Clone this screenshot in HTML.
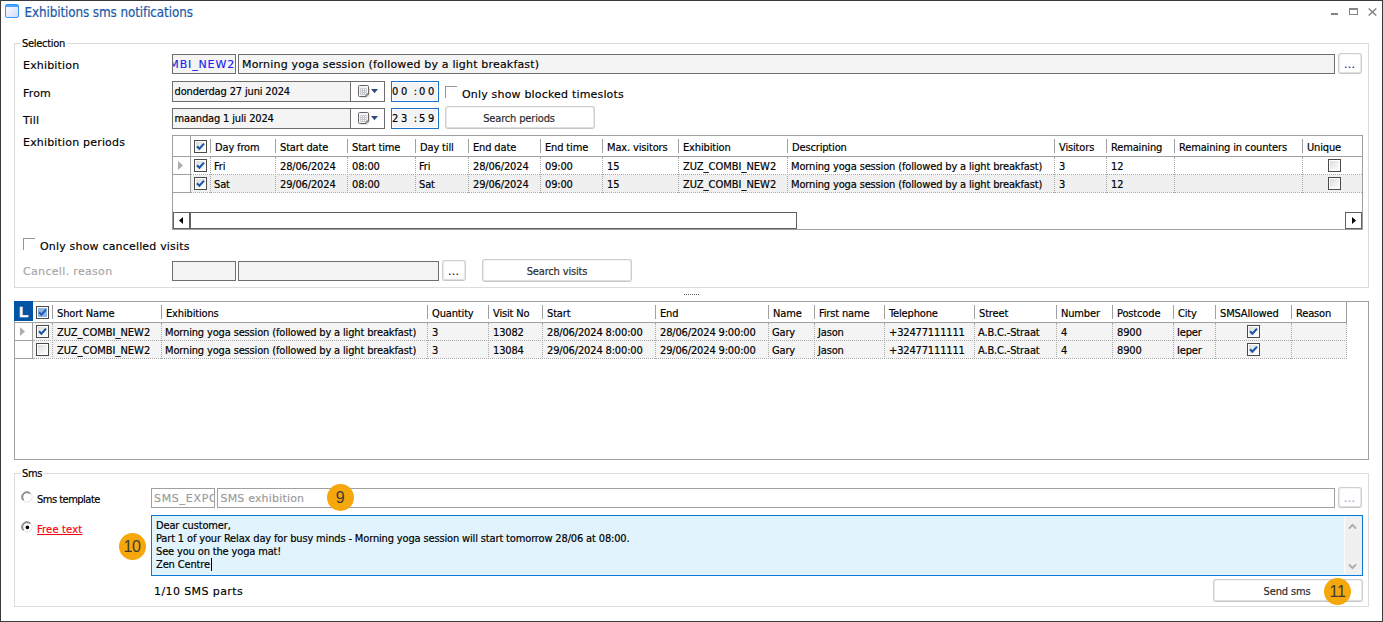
<!DOCTYPE html><html><head><meta charset="utf-8"><title>Exhibitions sms notifications</title><style>
*{box-sizing:border-box;margin:0;padding:0}
html,body{width:1383px;height:622px;overflow:hidden;background:#fff}
body{position:relative;font-family:"DejaVu Sans Condensed","DejaVu Sans","Liberation Sans",sans-serif;font-stretch:condensed;font-size:11px;color:#000}
.a{position:absolute}
.t{position:absolute;white-space:pre;font-family:"DejaVu Sans Condensed","DejaVu Sans","Liberation Sans",sans-serif;font-stretch:condensed;font-size:11px;line-height:13px;letter-spacing:-0.15px;color:#000;-webkit-text-stroke:0.18px currentColor}
.v{position:absolute;white-space:pre;font-family:"DejaVu Sans","Liberation Sans",sans-serif;font-stretch:normal;font-size:11px;line-height:13px;letter-spacing:0.18px;color:#000;-webkit-text-stroke:0.15px currentColor}
.win{position:absolute;left:0;top:0;width:1383px;height:622px;border:1px solid #3a3a3a;z-index:50;pointer-events:none}
.gb{position:absolute;border:1px solid #dcdcdc}
.gbl{background:#fff;padding:0 2px}
.fld{position:absolute;border:1px solid #6e6e6e;background:#f4f4f4;overflow:hidden}
.fld2{position:absolute;border:1px solid #a0a0a0;background:#fff;overflow:hidden}
.btn{position:absolute;border:1px solid #cecece;border-bottom-color:#c6c6c6;border-radius:3px;background:#fff;box-shadow:inset 1px 0 0 #e9e9e9, inset -1px 0 0 #e9e9e9, inset 0 1px 0 #f5f5f5, inset 0 -1px 0 #dfdfdf}
.grid{position:absolute;border:1px solid #a0a0a0;background:#fff;overflow:hidden}
.hs{position:absolute;width:1px;background:#a0a0a0}
.hl{position:absolute;height:1px;background:#a0a0a0}
.dv{position:absolute;width:0;border-left:1px dotted #a8a8a8}
.dh{position:absolute;height:0;border-top:1px dotted #a8a8a8}
.cb{position:absolute;width:13px;height:13px}
.circ{position:absolute;width:27px;height:27px;border-radius:50%;background:#f5a70c;color:#3b3b3b;font-family:"Liberation Sans",sans-serif;font-stretch:normal;font-size:16px;line-height:28.5px;text-align:center;letter-spacing:-0.3px}
</style></head><body>
<div class="win"></div>
<svg class="a" style="left:5px;top:4px" width="14" height="14" viewBox="0 0 14 14"><defs><linearGradient id="ig" x1="0" y1="0" x2="1" y2="1"><stop offset="0" stop-color="#ffffff"/><stop offset="1" stop-color="#d5d8f8"/></linearGradient></defs><rect x="0.5" y="0.5" width="13" height="13" rx="1.6" fill="url(#ig)" stroke="#2f97ff" stroke-width="1"/><rect x="1" y="1" width="12" height="2" fill="#4aa3ff"/></svg>
<span class="t" style="left:24.5px;top:3.5px;font-size:13.33px;line-height:17px;letter-spacing:-0.1px;color:#1a5aa6">Exhibitions sms notifications</span>
<div class="a" style="left:1331px;top:13px;width:7px;height:2px;background:#848484"></div>
<div class="a" style="left:1349px;top:8px;width:9px;height:7px;border:1px solid #848484;border-top-width:2px"></div>
<svg class="a" style="left:1368px;top:8px" width="9" height="8" viewBox="0 0 9 8"><path d="M0.7 0.5 L8.3 7.5 M8.3 0.5 L0.7 7.5" stroke="#848484" stroke-width="1.5" fill="none"/></svg>
<div class="gb" style="left:14px;top:43px;width:1355px;height:245px"></div>
<span class="t gbl" style="left:21px;top:37px;padding-left:1px;letter-spacing:-0.3px">Selection</span>
<span class="v" style="left:23px;top:59px;">Exhibition</span>
<span class="v" style="left:23px;top:87px;">From</span>
<span class="v" style="left:23px;top:114px;">Till</span>
<span class="v" style="left:23px;top:136px;">Exhibition periods</span>
<div class="fld" style="left:172px;top:54px;width:64px;height:20px"><span class="v" style="right:0px;top:3px;color:#2222ee;letter-spacing:0.85px">ZUZ_COMBI_NEW2</span></div>
<div class="fld" style="left:238px;top:54px;width:1097px;height:20px"><span class="v" style="left:3px;top:3px">Morning yoga session (followed by a light breakfast)</span></div>
<div class="btn" style="left:1338px;top:53px;width:24px;height:21px"><span class="v" style="left:5px;top:4px;color:#1a1aa0;letter-spacing:0.3px">...</span></div>
<div class="fld" style="left:172px;top:81px;width:213px;height:21px;background:#fff"><div class="a" style="left:0;top:0;width:177px;height:19px;background:#f4f4f4"></div><div class="a" style="left:177px;top:0;width:1px;height:19px;background:#6e6e6e"></div><span class="t" style="left:1.5px;top:3px">donderdag 27 juni 2024</span><svg class="a" style="left:185px;top:3px" width="13" height="14" viewBox="0 0 13 14"><path d="M2.5 2.5 H12 V10.5 L9.5 13 H2.5 Z" fill="#d9d9d9" opacity="0.7"/><path d="M1.5 0.5 H9.5 Q10.5 0.5 10.5 1.5 V9 L8 11.5 H1.5 Q0.5 11.5 0.5 10.5 V1.5 Q0.5 0.5 1.5 0.5 Z" fill="#f2f5fc" stroke="#6f6360" stroke-width="1"/><path d="M8 11.5 V9 H10.5" fill="none" stroke="#6f6360" stroke-width="1"/><rect x="2.2" y="3.2" width="6.4" height="6.8" fill="#c3c5cc"/><g fill="#ffffff"><rect x="3" y="4" width="1" height="1"/><rect x="5" y="4" width="1" height="1"/><rect x="7" y="4" width="1" height="1"/><rect x="3" y="6" width="1" height="1"/><rect x="5" y="6" width="1" height="1"/><rect x="7" y="6" width="1" height="1"/><rect x="3" y="8" width="1" height="1"/><rect x="5" y="8" width="1" height="1"/><rect x="7" y="8" width="1" height="1"/></g></svg><svg class="a" style="left:198px;top:7px" width="8" height="5" viewBox="0 0 8 5"><path d="M0 0 H7 L3.5 4.2 Z" fill="#2f4b82"/></svg></div>
<div class="fld" style="left:172px;top:108px;width:213px;height:21px;background:#fff"><div class="a" style="left:0;top:0;width:177px;height:19px;background:#f4f4f4"></div><div class="a" style="left:177px;top:0;width:1px;height:19px;background:#6e6e6e"></div><span class="t" style="left:1.5px;top:3px">maandag 1 juli 2024</span><svg class="a" style="left:185px;top:3px" width="13" height="14" viewBox="0 0 13 14"><path d="M2.5 2.5 H12 V10.5 L9.5 13 H2.5 Z" fill="#d9d9d9" opacity="0.7"/><path d="M1.5 0.5 H9.5 Q10.5 0.5 10.5 1.5 V9 L8 11.5 H1.5 Q0.5 11.5 0.5 10.5 V1.5 Q0.5 0.5 1.5 0.5 Z" fill="#f2f5fc" stroke="#6f6360" stroke-width="1"/><path d="M8 11.5 V9 H10.5" fill="none" stroke="#6f6360" stroke-width="1"/><rect x="2.2" y="3.2" width="6.4" height="6.8" fill="#c3c5cc"/><g fill="#ffffff"><rect x="3" y="4" width="1" height="1"/><rect x="5" y="4" width="1" height="1"/><rect x="7" y="4" width="1" height="1"/><rect x="3" y="6" width="1" height="1"/><rect x="5" y="6" width="1" height="1"/><rect x="7" y="6" width="1" height="1"/><rect x="3" y="8" width="1" height="1"/><rect x="5" y="8" width="1" height="1"/><rect x="7" y="8" width="1" height="1"/></g></svg><svg class="a" style="left:198px;top:7px" width="8" height="5" viewBox="0 0 8 5"><path d="M0 0 H7 L3.5 4.2 Z" fill="#2f4b82"/></svg></div>
<div class="a" style="left:391px;top:81px;width:48px;height:21px;border:1px solid #1874cd;background:#fff"><div class="a" style="left:1px;top:1px;width:44px;height:17px;background:#f4f4f4"></div><span class="t" style="left:0px;top:3px;letter-spacing:0">0</span><span class="t" style="left:9px;top:3px;letter-spacing:0">0</span><span class="t" style="left:21.7px;top:3px;letter-spacing:0">:</span><span class="t" style="left:27px;top:3px;letter-spacing:0">0</span><span class="t" style="left:36px;top:3px;letter-spacing:0">0</span></div>
<div class="a" style="left:391px;top:108px;width:48px;height:21px;border:1px solid #1874cd;background:#fff"><div class="a" style="left:1px;top:1px;width:44px;height:17px;background:#f4f4f4"></div><span class="t" style="left:0px;top:3px;letter-spacing:0">2</span><span class="t" style="left:9px;top:3px;letter-spacing:0">3</span><span class="t" style="left:21.7px;top:3px;letter-spacing:0">:</span><span class="t" style="left:27px;top:3px;letter-spacing:0">5</span><span class="t" style="left:36px;top:3px;letter-spacing:0">9</span></div>
<div class="a" style="left:445px;top:86px;width:12px;height:12px;border-left:1px solid #959595;border-top:1px solid #959595;background:#fff"></div>
<span class="v" style="left:462px;top:88px;">Only show blocked timeslots</span>
<div class="btn" style="left:445px;top:106px;width:150px;height:23px"><span class="t" style="left:0;right:2px;top:5px;text-align:center;color:#2b2b2b">Search periods</span></div>
<div class="grid" style="left:172px;top:135px;width:1191px;height:95px"></div>
<div class="hl" style="left:173px;top:156px;width:1189px"></div>
<div class="hs" style="left:190px;top:136px;height:57px"></div>
<div class="hl" style="left:173px;top:174px;width:18px"></div>
<div class="hl" style="left:173px;top:192px;width:18px"></div>
<div class="a" style="left:191px;top:175px;width:1171px;height:17px;background:#f0f0f0"></div>
<div class="hs" style="left:210px;top:139px;height:14px"></div>
<span class="t" style="left:215px;top:141px;">Day from</span>
<div class="dv" style="left:210px;top:157px;height:36px"></div>
<div class="hs" style="left:275px;top:139px;height:14px"></div>
<span class="t" style="left:280px;top:141px;">Start date</span>
<div class="dv" style="left:275px;top:157px;height:36px"></div>
<div class="hs" style="left:347px;top:139px;height:14px"></div>
<span class="t" style="left:352px;top:141px;">Start time</span>
<div class="dv" style="left:347px;top:157px;height:36px"></div>
<div class="hs" style="left:415px;top:139px;height:14px"></div>
<span class="t" style="left:420px;top:141px;">Day till</span>
<div class="dv" style="left:415px;top:157px;height:36px"></div>
<div class="hs" style="left:468px;top:139px;height:14px"></div>
<span class="t" style="left:473px;top:141px;">End date</span>
<div class="dv" style="left:468px;top:157px;height:36px"></div>
<div class="hs" style="left:540px;top:139px;height:14px"></div>
<span class="t" style="left:545px;top:141px;">End time</span>
<div class="dv" style="left:540px;top:157px;height:36px"></div>
<div class="hs" style="left:602px;top:139px;height:14px"></div>
<span class="t" style="left:607px;top:141px;">Max. visitors</span>
<div class="dv" style="left:602px;top:157px;height:36px"></div>
<div class="hs" style="left:678px;top:139px;height:14px"></div>
<span class="t" style="left:683px;top:141px;">Exhibition</span>
<div class="dv" style="left:678px;top:157px;height:36px"></div>
<div class="hs" style="left:787px;top:139px;height:14px"></div>
<span class="t" style="left:792px;top:141px;">Description</span>
<div class="dv" style="left:787px;top:157px;height:36px"></div>
<div class="hs" style="left:1054px;top:139px;height:14px"></div>
<span class="t" style="left:1059px;top:141px;">Visitors</span>
<div class="dv" style="left:1054px;top:157px;height:36px"></div>
<div class="hs" style="left:1106px;top:139px;height:14px"></div>
<span class="t" style="left:1111px;top:141px;">Remaining</span>
<div class="dv" style="left:1106px;top:157px;height:36px"></div>
<div class="hs" style="left:1174px;top:139px;height:14px"></div>
<span class="t" style="left:1179px;top:141px;">Remaining in counters</span>
<div class="dv" style="left:1174px;top:157px;height:36px"></div>
<div class="hs" style="left:1302px;top:139px;height:14px"></div>
<span class="t" style="left:1307px;top:141px;">Unique</span>
<div class="dv" style="left:1302px;top:157px;height:36px"></div>
<div class="dh" style="left:191px;top:174px;width:1171px"></div>
<div class="dh" style="left:191px;top:192px;width:1171px"></div>
<svg class="cb" style="left:194px;top:140px" viewBox="0 0 13 13"><defs><linearGradient id="cg" x1="0" y1="0" x2="1" y2="1"><stop offset="0" stop-color="#dcdcdc"/><stop offset="1" stop-color="#ffffff"/></linearGradient></defs><rect x="0.5" y="0.5" width="12" height="12" fill="#fff" stroke="#4a4a4a"/><rect x="2" y="2" width="9" height="9" fill="url(#cg)"/><path d="M3 6.2 L5.4 8.8 L10 3.6" fill="none" stroke="#1b55a8" stroke-width="2.1"/></svg>
<svg class="cb" style="left:194px;top:159px" viewBox="0 0 13 13"><defs><linearGradient id="cg" x1="0" y1="0" x2="1" y2="1"><stop offset="0" stop-color="#dcdcdc"/><stop offset="1" stop-color="#ffffff"/></linearGradient></defs><rect x="0.5" y="0.5" width="12" height="12" fill="#fff" stroke="#4a4a4a"/><rect x="2" y="2" width="9" height="9" fill="url(#cg)"/><path d="M3 6.2 L5.4 8.8 L10 3.6" fill="none" stroke="#1b55a8" stroke-width="2.1"/></svg>
<span class="t" style="left:214px;top:160px;">Fri</span>
<span class="t" style="left:280px;top:160px;">28/06/2024</span>
<span class="t" style="left:352px;top:160px;">08:00</span>
<span class="t" style="left:419px;top:160px;">Fri</span>
<span class="t" style="left:473px;top:160px;">28/06/2024</span>
<span class="t" style="left:545px;top:160px;">09:00</span>
<span class="t" style="left:607px;top:160px;">15</span>
<span class="t" style="left:683px;top:160px;letter-spacing:0">ZUZ_COMBI_NEW2</span>
<span class="t" style="left:791px;top:160px;">Morning yoga session (followed by a light breakfast)</span>
<span class="t" style="left:1059px;top:160px;">3</span>
<span class="t" style="left:1111px;top:160px;">12</span>
<svg class="cb" style="left:1328px;top:159px" viewBox="0 0 13 13"><defs><linearGradient id="cg" x1="0" y1="0" x2="1" y2="1"><stop offset="0" stop-color="#dcdcdc"/><stop offset="1" stop-color="#ffffff"/></linearGradient></defs><rect x="0.5" y="0.5" width="12" height="12" fill="#fff" stroke="#4a4a4a"/><rect x="2" y="2" width="9" height="9" fill="url(#cg)"/></svg>
<svg class="cb" style="left:194px;top:177px" viewBox="0 0 13 13"><defs><linearGradient id="cg" x1="0" y1="0" x2="1" y2="1"><stop offset="0" stop-color="#dcdcdc"/><stop offset="1" stop-color="#ffffff"/></linearGradient></defs><rect x="0.5" y="0.5" width="12" height="12" fill="#fff" stroke="#4a4a4a"/><rect x="2" y="2" width="9" height="9" fill="url(#cg)"/><path d="M3 6.2 L5.4 8.8 L10 3.6" fill="none" stroke="#1b55a8" stroke-width="2.1"/></svg>
<span class="t" style="left:214px;top:178px;">Sat</span>
<span class="t" style="left:280px;top:178px;">29/06/2024</span>
<span class="t" style="left:352px;top:178px;">08:00</span>
<span class="t" style="left:419px;top:178px;">Sat</span>
<span class="t" style="left:473px;top:178px;">29/06/2024</span>
<span class="t" style="left:545px;top:178px;">09:00</span>
<span class="t" style="left:607px;top:178px;">15</span>
<span class="t" style="left:683px;top:178px;letter-spacing:0">ZUZ_COMBI_NEW2</span>
<span class="t" style="left:791px;top:178px;">Morning yoga session (followed by a light breakfast)</span>
<span class="t" style="left:1059px;top:178px;">3</span>
<span class="t" style="left:1111px;top:178px;">12</span>
<svg class="cb" style="left:1328px;top:177px" viewBox="0 0 13 13"><defs><linearGradient id="cg" x1="0" y1="0" x2="1" y2="1"><stop offset="0" stop-color="#dcdcdc"/><stop offset="1" stop-color="#ffffff"/></linearGradient></defs><rect x="0.5" y="0.5" width="12" height="12" fill="#fff" stroke="#4a4a4a"/><rect x="2" y="2" width="9" height="9" fill="url(#cg)"/></svg>
<svg class="a" style="left:178px;top:161px" width="5" height="9" viewBox="0 0 5 9"><path d="M0 0 L5 4.5 L0 9 Z" fill="#adadad"/></svg>
<div class="a" style="left:173px;top:212px;width:17px;height:17px;border:1px solid #606060;background:#fff"></div>
<svg class="a" style="left:179px;top:217px" width="4" height="7" viewBox="0 0 4 7"><path d="M4 0 V7 L0 3.5 Z" fill="#000"/></svg>
<div class="a" style="left:190px;top:212px;width:607px;height:17px;border:1px solid #606060;background:#fff"></div>
<div class="a" style="left:1345px;top:212px;width:17px;height:17px;border:1px solid #606060;background:#fff"></div>
<svg class="a" style="left:1352px;top:217px" width="4" height="7" viewBox="0 0 4 7"><path d="M0 0 V7 L4 3.5 Z" fill="#000"/></svg>
<div class="a" style="left:23px;top:238px;width:12px;height:12px;border-left:1px solid #959595;border-top:1px solid #959595;background:#fff"></div>
<span class="v" style="left:40px;top:240px;">Only show cancelled visits</span>
<span class="v" style="left:23px;top:265px;color:#a5a5a5;letter-spacing:0.33px">Cancell. reason</span>
<div class="fld" style="left:172px;top:261px;width:64px;height:20px"></div>
<div class="fld" style="left:238px;top:261px;width:201px;height:20px"></div>
<div class="btn" style="left:442px;top:260px;width:24px;height:21px"><span class="v" style="left:5px;top:4px;color:#222;letter-spacing:0.3px">...</span></div>
<div class="btn" style="left:482px;top:259px;width:150px;height:23px"><span class="t" style="left:0;right:0px;top:5px;text-align:center;color:#2b2b2b">Search visits</span></div>
<div class="a" style="left:684px;top:294px;width:15px;height:1px;background:repeating-linear-gradient(90deg,#5a5a5a 0,#5a5a5a 1px,transparent 1px,transparent 2px)"></div>
<div class="grid" style="left:14px;top:301px;width:1355px;height:159px"></div>
<div class="a" style="left:14px;top:301px;width:19px;height:20px;background:#0054a6"></div>
<span class="a" style="left:19px;top:302.5px;font-family:'Liberation Sans',sans-serif;font-stretch:normal;font-weight:bold;font-size:15.5px;line-height:18px;color:#fff;-webkit-text-stroke:0.35px #fff">L</span>
<div class="a" style="left:33px;top:323px;width:1313px;height:35px;background:#f4f4f4"></div>
<div class="hl" style="left:15px;top:322px;width:1332px"></div>
<div class="hs" style="left:32px;top:322px;height:37px"></div>
<div class="hs" style="left:1346px;top:302px;height:21px"></div>
<div class="hl" style="left:15px;top:340px;width:18px"></div>
<div class="hl" style="left:15px;top:358px;width:18px"></div>
<div class="hs" style="left:52px;top:305px;height:14px"></div>
<span class="t" style="left:57px;top:307px;">Short Name</span>
<div class="dv" style="left:52px;top:323px;height:36px"></div>
<div class="hs" style="left:161px;top:305px;height:14px"></div>
<span class="t" style="left:166px;top:307px;">Exhibitions</span>
<div class="dv" style="left:161px;top:323px;height:36px"></div>
<div class="hs" style="left:427px;top:305px;height:14px"></div>
<span class="t" style="left:432px;top:307px;">Quantity</span>
<div class="dv" style="left:427px;top:323px;height:36px"></div>
<div class="hs" style="left:488px;top:305px;height:14px"></div>
<span class="t" style="left:493px;top:307px;">Visit No</span>
<div class="dv" style="left:488px;top:323px;height:36px"></div>
<div class="hs" style="left:542px;top:305px;height:14px"></div>
<span class="t" style="left:547px;top:307px;">Start</span>
<div class="dv" style="left:542px;top:323px;height:36px"></div>
<div class="hs" style="left:655px;top:305px;height:14px"></div>
<span class="t" style="left:660px;top:307px;">End</span>
<div class="dv" style="left:655px;top:323px;height:36px"></div>
<div class="hs" style="left:768px;top:305px;height:14px"></div>
<span class="t" style="left:773px;top:307px;">Name</span>
<div class="dv" style="left:768px;top:323px;height:36px"></div>
<div class="hs" style="left:814px;top:305px;height:14px"></div>
<span class="t" style="left:819px;top:307px;">First name</span>
<div class="dv" style="left:814px;top:323px;height:36px"></div>
<div class="hs" style="left:884px;top:305px;height:14px"></div>
<span class="t" style="left:889px;top:307px;">Telephone</span>
<div class="dv" style="left:884px;top:323px;height:36px"></div>
<div class="hs" style="left:974px;top:305px;height:14px"></div>
<span class="t" style="left:979px;top:307px;">Street</span>
<div class="dv" style="left:974px;top:323px;height:36px"></div>
<div class="hs" style="left:1056px;top:305px;height:14px"></div>
<span class="t" style="left:1061px;top:307px;">Number</span>
<div class="dv" style="left:1056px;top:323px;height:36px"></div>
<div class="hs" style="left:1112px;top:305px;height:14px"></div>
<span class="t" style="left:1117px;top:307px;">Postcode</span>
<div class="dv" style="left:1112px;top:323px;height:36px"></div>
<div class="hs" style="left:1173px;top:305px;height:14px"></div>
<span class="t" style="left:1178px;top:307px;">City</span>
<div class="dv" style="left:1173px;top:323px;height:36px"></div>
<div class="hs" style="left:1215px;top:305px;height:14px"></div>
<span class="t" style="left:1220px;top:307px;">SMSAllowed</span>
<div class="dv" style="left:1215px;top:323px;height:36px"></div>
<div class="hs" style="left:1291px;top:305px;height:14px"></div>
<span class="t" style="left:1296px;top:307px;">Reason</span>
<div class="dv" style="left:1291px;top:323px;height:36px"></div>
<div class="dv" style="left:1346px;top:323px;height:36px"></div>
<div class="dh" style="left:33px;top:340px;width:1314px"></div>
<div class="dh" style="left:33px;top:358px;width:1314px"></div>
<svg class="cb" style="left:36px;top:306px" viewBox="0 0 13 13"><defs><linearGradient id="cg" x1="0" y1="0" x2="1" y2="1"><stop offset="0" stop-color="#dcdcdc"/><stop offset="1" stop-color="#ffffff"/></linearGradient></defs><rect x="0.5" y="0.5" width="12" height="12" fill="#fff" stroke="#4a4a4a"/><rect x="2" y="2" width="9" height="9" fill="#8fb5e0"/><path d="M3 6.2 L5.4 8.8 L10 3.6" fill="none" stroke="#1e5fb4" stroke-width="2.1"/></svg>
<svg class="cb" style="left:36px;top:325px" viewBox="0 0 13 13"><defs><linearGradient id="cg" x1="0" y1="0" x2="1" y2="1"><stop offset="0" stop-color="#dcdcdc"/><stop offset="1" stop-color="#ffffff"/></linearGradient></defs><rect x="0.5" y="0.5" width="12" height="12" fill="#fff" stroke="#4a4a4a"/><rect x="2" y="2" width="9" height="9" fill="url(#cg)"/><path d="M3 6.2 L5.4 8.8 L10 3.6" fill="none" stroke="#1b55a8" stroke-width="2.1"/></svg>
<span class="t" style="left:57px;top:326px;letter-spacing:0">ZUZ_COMBI_NEW2</span>
<span class="t" style="left:165px;top:326px;">Morning yoga session (followed by a light breakfast)</span>
<span class="t" style="left:432px;top:326px;">3</span>
<span class="t" style="left:493px;top:326px;">13082</span>
<span class="t" style="left:547px;top:326px;">28/06/2024 8:00:00</span>
<span class="t" style="left:660px;top:326px;">28/06/2024 9:00:00</span>
<span class="t" style="left:772px;top:326px;">Gary</span>
<span class="t" style="left:818px;top:326px;">Jason</span>
<span class="t" style="left:889px;top:326px;">+32477111111</span>
<span class="t" style="left:978px;top:326px;">A.B.C.-Straat</span>
<span class="t" style="left:1061px;top:326px;">4</span>
<span class="t" style="left:1117px;top:326px;">8900</span>
<span class="t" style="left:1177px;top:326px;">Ieper</span>
<svg class="cb" style="left:1247px;top:325px" viewBox="0 0 13 13"><defs><linearGradient id="cg" x1="0" y1="0" x2="1" y2="1"><stop offset="0" stop-color="#dcdcdc"/><stop offset="1" stop-color="#ffffff"/></linearGradient></defs><rect x="0.5" y="0.5" width="12" height="12" fill="#fff" stroke="#4a4a4a"/><rect x="2" y="2" width="9" height="9" fill="url(#cg)"/><path d="M3 6.2 L5.4 8.8 L10 3.6" fill="none" stroke="#1b55a8" stroke-width="2.1"/></svg>
<svg class="cb" style="left:36px;top:343px" viewBox="0 0 13 13"><defs><linearGradient id="cg" x1="0" y1="0" x2="1" y2="1"><stop offset="0" stop-color="#dcdcdc"/><stop offset="1" stop-color="#ffffff"/></linearGradient></defs><rect x="0.5" y="0.5" width="12" height="12" fill="#fff" stroke="#4a4a4a"/><rect x="2" y="2" width="9" height="9" fill="url(#cg)"/></svg>
<span class="t" style="left:57px;top:344px;letter-spacing:0">ZUZ_COMBI_NEW2</span>
<span class="t" style="left:165px;top:344px;">Morning yoga session (followed by a light breakfast)</span>
<span class="t" style="left:432px;top:344px;">3</span>
<span class="t" style="left:493px;top:344px;">13084</span>
<span class="t" style="left:547px;top:344px;">29/06/2024 8:00:00</span>
<span class="t" style="left:660px;top:344px;">29/06/2024 9:00:00</span>
<span class="t" style="left:772px;top:344px;">Gary</span>
<span class="t" style="left:818px;top:344px;">Jason</span>
<span class="t" style="left:889px;top:344px;">+32477111111</span>
<span class="t" style="left:978px;top:344px;">A.B.C.-Straat</span>
<span class="t" style="left:1061px;top:344px;">4</span>
<span class="t" style="left:1117px;top:344px;">8900</span>
<span class="t" style="left:1177px;top:344px;">Ieper</span>
<svg class="cb" style="left:1247px;top:343px" viewBox="0 0 13 13"><defs><linearGradient id="cg" x1="0" y1="0" x2="1" y2="1"><stop offset="0" stop-color="#dcdcdc"/><stop offset="1" stop-color="#ffffff"/></linearGradient></defs><rect x="0.5" y="0.5" width="12" height="12" fill="#fff" stroke="#4a4a4a"/><rect x="2" y="2" width="9" height="9" fill="url(#cg)"/><path d="M3 6.2 L5.4 8.8 L10 3.6" fill="none" stroke="#1b55a8" stroke-width="2.1"/></svg>
<svg class="a" style="left:20px;top:327px" width="5" height="9" viewBox="0 0 5 9"><path d="M0 0 L5 4.5 L0 9 Z" fill="#adadad"/></svg>
<div class="gb" style="left:14px;top:473px;width:1355px;height:134px"></div>
<span class="t gbl" style="left:21px;top:467px;padding-left:1px;letter-spacing:-0.3px">Sms</span>
<svg class="a" style="left:20.5px;top:490.5px" width="12" height="12" viewBox="0 0 12 12"><circle cx="6" cy="6" r="5.2" fill="#fff" stroke="#e4e4e4" stroke-width="1"/><path d="M2.2 9.6 A5.2 5.2 0 0 1 9.6 2.2" fill="none" stroke="#8a8a8a" stroke-width="1"/><path d="M2.9 8.9 A4.2 4.2 0 0 1 8.9 2.9" fill="none" stroke="#555" stroke-width="0.8"/></svg>
<svg class="a" style="left:20.5px;top:520.5px" width="12" height="12" viewBox="0 0 12 12"><circle cx="6" cy="6" r="5.2" fill="#fff" stroke="#e4e4e4" stroke-width="1"/><path d="M2.2 9.6 A5.2 5.2 0 0 1 9.6 2.2" fill="none" stroke="#8a8a8a" stroke-width="1"/><path d="M2.9 8.9 A4.2 4.2 0 0 1 8.9 2.9" fill="none" stroke="#555" stroke-width="0.8"/><circle cx="6.4" cy="6.4" r="1.8" fill="#000"/></svg>
<span class="t" style="left:37px;top:493px;letter-spacing:-0.5px">Sms template</span>
<span class="t" style="left:37px;top:523px;color:#fa0012;text-decoration:underline;letter-spacing:0.2px">Free text</span>
<div class="fld2" style="left:151px;top:488px;width:64px;height:20px"><span class="v" style="left:2px;top:3px;color:#9a9a9a;letter-spacing:0.7px">SMS_EXPO</span></div>
<div class="fld2" style="left:217px;top:488px;width:1118px;height:20px"><span class="v" style="left:2.5px;top:3px;color:#9a9a9a">SMS exhibition</span></div>
<div class="btn" style="left:1338px;top:487px;width:24px;height:21px"><span class="v" style="left:5px;top:4px;color:#9aa0e0;letter-spacing:0.3px">...</span></div>
<div class="a" style="left:151px;top:515px;width:1212px;height:61px;border:1px solid #0a78d7;background:#e1f3fd"></div>
<div class="a" style="left:1344px;top:517px;width:18px;height:57px;background:#f0f0f0;border-left:1px solid #fafdff"></div>
<svg class="a" style="left:1348px;top:523px" width="9" height="7" viewBox="0 0 9 7"><path d="M0.9 5.6 L4.5 2 L8.1 5.6" fill="none" stroke="#adadad" stroke-width="2"/></svg>
<svg class="a" style="left:1348px;top:562.5px" width="9" height="7" viewBox="0 0 9 7"><path d="M0.9 1.4 L4.5 5 L8.1 1.4" fill="none" stroke="#adadad" stroke-width="2"/></svg>
<span class="t" style="left:156px;top:519px;">Dear customer,</span>
<span class="t" style="left:156px;top:532px;">Part 1 of your Relax day for busy minds - Morning yoga session will start tomorrow 28/06 at 08:00.</span>
<span class="t" style="left:156px;top:545px;">See you on the yoga mat!</span>
<span class="t" style="left:156px;top:558px;">Zen Centre</span>
<div class="a" style="left:211px;top:558px;width:1px;height:13px;background:#000"></div>
<span class="v" style="left:154px;top:585px;letter-spacing:0.4px">1/10 SMS parts</span>
<div class="btn" style="left:1213px;top:579px;width:150px;height:23px"><span class="t" style="left:0;right:2px;top:5px;text-align:center;color:#2b2b2b">Send sms</span></div>
<div class="circ" style="left:326.5px;top:483.5px">9</div>
<div class="circ" style="left:118.5px;top:532.5px">10</div>
<div class="circ" style="left:1324px;top:578px">11</div>
</body></html>
